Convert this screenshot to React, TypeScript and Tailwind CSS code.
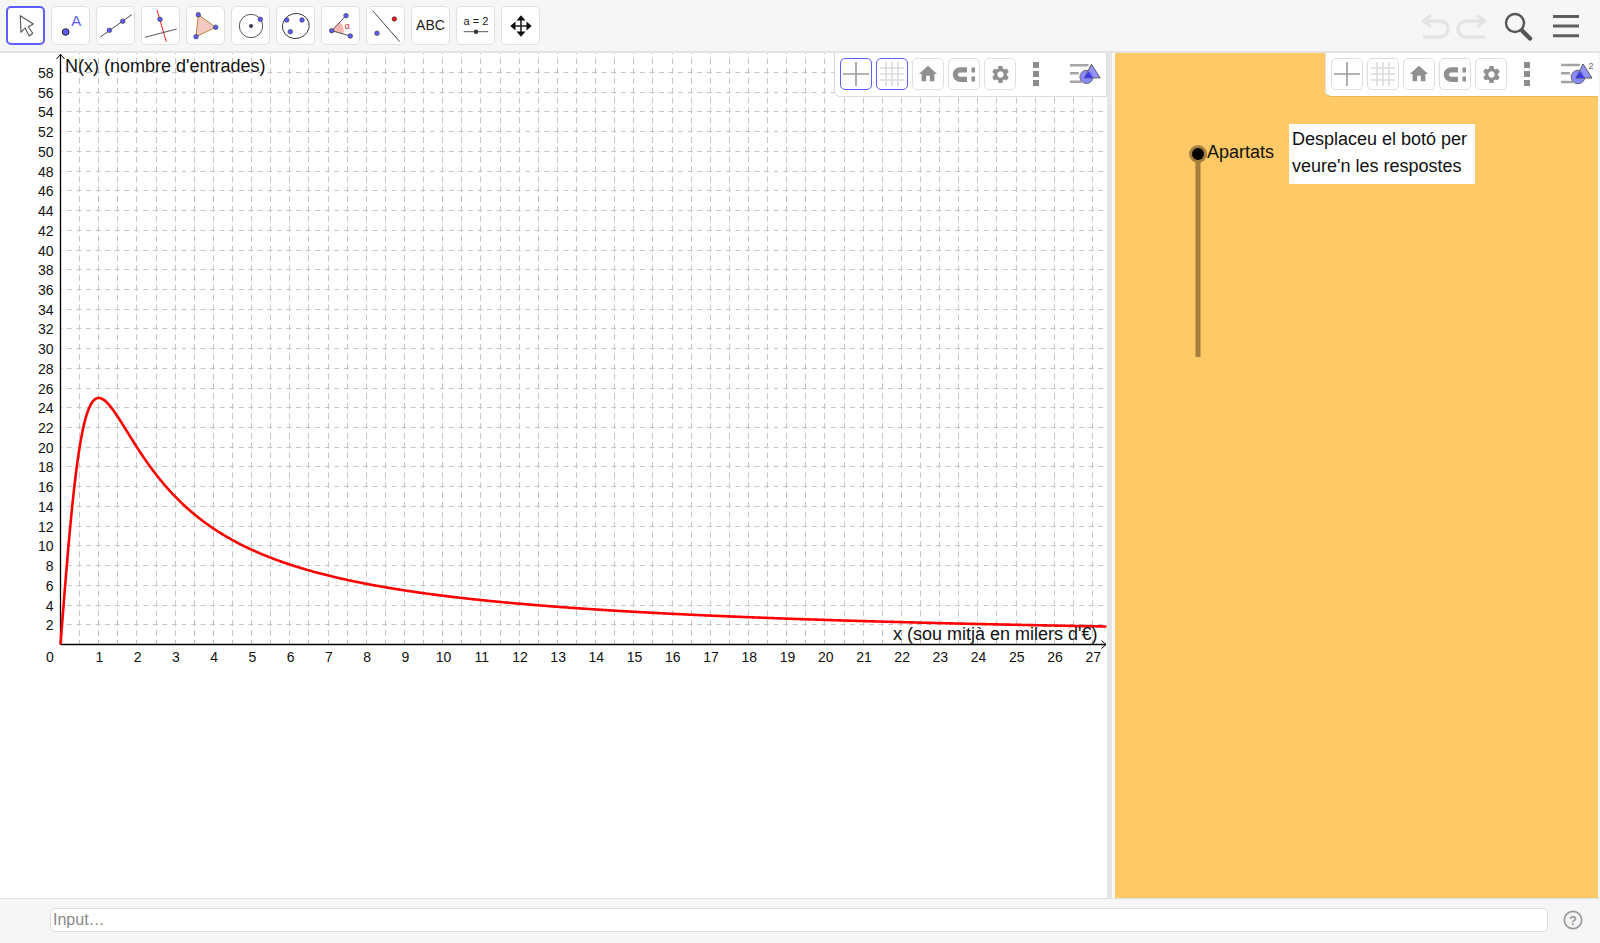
import React from "react";
import { MdHome, MdSettings } from "react-icons/md";

const BLUE = "#5c5cff";
const ox = 60.5, oy = 591.5, ux = 38.22, uy = 9.862;
const px = (x: number) => ox + x * ux;
const py = (y: number) => oy - y * uy;
const crisp = (v: number) => Math.round(v - 0.5) + 0.5;

function curve() {
  const pts: string[] = [];
  for (let sx = 0; sx <= 1046.5; sx += 1) {
    const x = sx / ux;
    pts.push(`${(ox + sx).toFixed(1)},${py((50 * x) / (x * x + 1)).toFixed(2)}`);
  }
  return pts.join(" ");
}

function Graph() {
  const xs = Array.from({ length: 55 }, (_, i) => i + 1);
  const ys = Array.from({ length: 29 }, (_, i) => (i + 1) * 2);
  const xl = Array.from({ length: 27 }, (_, i) => i + 1);
  return (
    <svg width="1107" height="845" className="block" style={{ fontFamily: "'Liberation Sans', Arial, sans-serif" }}>
      {xs.map((i) => (
        <line key={i} x1={crisp(ox + (i * ux) / 2)} x2={crisp(ox + (i * ux) / 2)} y1={0} y2={oy} stroke="#c6c6c6" strokeWidth="1" strokeDasharray="6 3.86" strokeDashoffset="4.76" />
      ))}
      {ys.map((v) => (
        <line key={v} x1={ox} x2={1107} y1={crisp(py(v))} y2={crisp(py(v))} stroke="#c6c6c6" strokeWidth="1" strokeDasharray="5 4.55" strokeDashoffset="3.2" />
      ))}
      <line x1={ox} x2={ox} y1={oy} y2={1} stroke="#000" strokeWidth="1.3" />
      <line x1={ox} x2={1106} y1={oy} y2={oy} stroke="#000" strokeWidth="1.3" />
      <path d="M56.5 6 L60.5 1.5 L64.5 6" fill="none" stroke="#000" strokeWidth="1" />
      <path d={`M1101.5 ${oy - 4} L1106 ${oy} L1101.5 ${oy + 4}`} fill="none" stroke="#000" strokeWidth="1" />
      <polyline points={curve()} fill="none" stroke="#ff0000" strokeWidth="2.6" strokeLinejoin="round" />
      {ys.map((v) => (
        <text key={v} x="53.5" y={py(v) + 5.5} fontSize="14" textAnchor="end" fill="#111">{v}</text>
      ))}
      <text x="50" y={oy + 17.5} fontSize="14" textAnchor="middle" fill="#111">0</text>
      {xl.map((v) => (
        <text key={v} x={px(v) + 0.8} y={oy + 17.5} fontSize="14" textAnchor="middle" fill="#111">{v}</text>
      ))}
      <text x="65" y="19" fontSize="18" fill="#111">N(x) (nombre d'entrades)</text>
      <text x="893" y="587" fontSize="18" fill="#111">x (sou mitjà en milers d'€)</text>
    </svg>
  );
}

function ToolBtn({ active, children }: { active?: boolean; children: React.ReactNode }) {
  return (
    <div className={active
      ? "w-[39px] h-[39px] rounded-[5px] bg-white border-2 border-[#5c5cff] flex items-center justify-center"
      : "w-[39px] h-[39px] rounded-[5px] bg-white border border-[#e0e0e0] flex items-center justify-center"}>
      <svg width="37" height="37" viewBox="0 0 37 37" className="shrink-0">{children}</svg>
    </div>
  );
}

const Dot = ({ cx, cy, r = 2.3, fill = BLUE }: { cx: number; cy: number; r?: number; fill?: string }) => (
  <circle cx={cx} cy={cy} r={r} fill={fill} stroke="#333" strokeWidth="0.6" />
);

function Toolbar() {
  return (
    <div className="h-[53px] shrink-0 bg-[#f6f6f6] border-b-2 border-[#e4e4e4] flex items-start pt-[6px] pl-[6px] pr-[20px]">
      <div className="flex gap-[6px]">
        <ToolBtn active>
          <path d="M13.3 8.7 L14 25.3 L18 21 L22.3 29 L25.7 26.3 L21.3 19.7 L26.3 17 Z" fill="#fff" stroke="#555" strokeWidth="1.1" strokeLinejoin="round" />
        </ToolBtn>
        <ToolBtn>
          <circle cx="13.7" cy="25" r="3.3" fill={BLUE} stroke="#222" strokeWidth="1" />
          <text x="19.2" y="18.9" fontSize="15" fill={BLUE} fontFamily="'Liberation Sans', sans-serif">A</text>
        </ToolBtn>
        <ToolBtn>
          <line x1="3.3" y1="30" x2="34.7" y2="7.7" stroke="#333" strokeWidth="0.9" />
          <Dot cx={12.3} cy={23.3} />
          <Dot cx={25.7} cy={14.3} />
        </ToolBtn>
        <ToolBtn>
          <line x1="3" y1="30.3" x2="34.7" y2="22" stroke="#444" strokeWidth="0.9" />
          <line x1="15" y1="3" x2="24.3" y2="34.7" stroke="#f00" strokeWidth="0.9" />
          <Dot cx={18} cy={12.3} />
        </ToolBtn>
        <ToolBtn>
          <polygon points="11.3,7.7 28.7,20.3 9,29.7" fill="#f3c8c0" stroke="#b8863a" strokeWidth="1" />
          <Dot cx={11.3} cy={7.7} />
          <Dot cx={28.7} cy={20.3} />
          <Dot cx={9} cy={29.7} />
        </ToolBtn>
        <ToolBtn>
          <circle cx="19" cy="19" r="11.7" fill="none" stroke="#444" strokeWidth="0.9" />
          <Dot cx={19} cy={19} r={1.7} fill="#3a3a70" />
          <Dot cx={28.3} cy={12.3} />
        </ToolBtn>
        <ToolBtn>
          <ellipse cx="18.8" cy="19" rx="13.5" ry="12.5" fill="none" stroke="#333" strokeWidth="0.9" transform="rotate(-15 18.8 19)" />
          <Dot cx={9.7} cy={13} />
          <Dot cx={25} cy={13} />
          <Dot cx={13.3} cy={24.7} />
        </ToolBtn>
        <ToolBtn>
          <path d="M9.7 23.7 L18 15 A12 12 0 0 1 21.3 27 Z" fill="#f6b8b0" stroke="none" />
          <line x1="9.7" y1="23.7" x2="24" y2="8.7" stroke="#444" strokeWidth="0.9" />
          <line x1="9.7" y1="23.7" x2="28.3" y2="29" stroke="#444" strokeWidth="0.9" />
          <Dot cx={9.7} cy={23.7} />
          <Dot cx={24} cy={8.7} />
          <Dot cx={28.3} cy={29} />
          <text x="22.5" y="22" fontSize="9" fill="#e03030" fontFamily="'Liberation Sans', sans-serif">α</text>
        </ToolBtn>
        <ToolBtn>
          <line x1="5.7" y1="3.7" x2="32.7" y2="34.7" stroke="#333" strokeWidth="0.9" />
          <Dot cx={10} cy={26.3} />
          <Dot cx={27.3} cy={12} fill="#e8181c" />
        </ToolBtn>
        <div className="w-[39px] h-[39px] rounded-[5px] bg-white border border-[#e0e0e0] flex items-center justify-center text-[14px] text-[#222] font-['Liberation_Sans',Arial,sans-serif]">ABC</div>
        <ToolBtn>
          <text x="19" y="18" fontSize="11" textAnchor="middle" fill="#222" fontFamily="'Liberation Sans', sans-serif">a = 2</text>
          <line x1="6.7" y1="24.7" x2="31.3" y2="24.7" stroke="#555" strokeWidth="1" />
          <circle cx="19" cy="24.7" r="2.2" fill="#333" />
        </ToolBtn>
        <ToolBtn>
          <path d="M19 10 V28 M10 19 H28" stroke="#222" strokeWidth="1.6" />
          <path d="M19 8.3 L14.5 13.5 H23.5 Z M19 29.7 L14.5 24.5 H23.5 Z M8.3 19 L13.5 14.5 V23.5 Z M29.7 19 L24.5 14.5 V23.5 Z" fill="#111" />
        </ToolBtn>
      </div>
      <div className="ml-auto flex items-start">
        <svg width="180" height="46" viewBox="0 0 180 46" className="-mt-[6px]">
          <path d="M24 21 H40 A8 8 0 0 1 40 37 H23" fill="none" stroke="#e4e4e4" strokeWidth="3.4" />
          <path d="M31 15 L23.5 21 L31 27" fill="none" stroke="#e4e4e4" strokeWidth="3.4" />
          <path d="M84 21 H66 A8 8 0 0 0 66 37 H85" fill="none" stroke="#e4e4e4" strokeWidth="3.4" />
          <path d="M77 15 L84.5 21 L77 27" fill="none" stroke="#e4e4e4" strokeWidth="3.4" />
          <circle cx="115" cy="23" r="9" fill="none" stroke="#555" strokeWidth="2.4" />
          <path d="M122.5 31 L130 38.5" stroke="#555" strokeWidth="4.5" strokeLinecap="round" />
          <path d="M153 16.5 H179 M153 26 H179 M153 35.7 H179" stroke="#5e5e5e" strokeWidth="3" />
        </svg>
      </div>
    </div>
  );
}

function SBtn({ active, children }: { active?: boolean; children: React.ReactNode }) {
  return (
    <div className={active
      ? "w-[32px] h-[32px] rounded-[5px] bg-white border border-[#5c5cff] flex items-center justify-center"
      : "w-[32px] h-[32px] rounded-[5px] bg-white border border-[#dedede] flex items-center justify-center"}>
      {children}
    </div>
  );
}

function StylePanel({ active, sup }: { active?: boolean; sup?: boolean }) {
  return (
    <div className={sup
      ? "absolute top-0 right-0 h-[44px] w-[273px] bg-white border-l border-b border-l-[#e2e2e2] border-b-[#e8b858] rounded-bl-[6px] flex items-start pt-[5px] pl-[5px]"
      : "absolute top-0 right-0 h-[44px] w-[273px] bg-white border-l border-b border-r border-[#dcdcdc] rounded-bl-[6px] flex items-start pt-[5px] pl-[5px]"}>
      <div className="flex gap-[4px]">
        <SBtn active={active}>
          <svg width="30" height="30" viewBox="0 0 30 30"><path d="M15 3 V27 M2 15 H28" stroke="#9a9a9a" strokeWidth="1.6" /></svg>
        </SBtn>
        <SBtn active={active}>
          <svg width="30" height="30" viewBox="0 0 30 30"><path d="M9 3 V27 M15 3 V27 M21 3 V27 M3 9 H27 M3 15 H27 M3 21 H27" stroke="#dcdcdc" strokeWidth="1.6" /></svg>
        </SBtn>
        <SBtn><MdHome size={22} color="#909090" /></SBtn>
        <SBtn>
          <svg width="30" height="30" viewBox="0 0 30 30">
            <path d="M18 10.9 H11 A4.7 4.7 0 0 0 11 20.3 H18" fill="none" stroke="#909090" strokeWidth="5.2" />
            <rect x="22.5" y="8.5" width="3.5" height="5" fill="#909090" />
            <rect x="22.5" y="17.5" width="3.5" height="5" fill="#909090" />
          </svg>
        </SBtn>
        <SBtn><MdSettings size={21} color="#909090" /></SBtn>
      </div>
      <div className="ml-[17px] mt-[4px] flex flex-col gap-[3px]">
        <div className="w-[6px] h-[6px] bg-[#8c8c8c]" />
        <div className="w-[6px] h-[6px] bg-[#8c8c8c]" />
        <div className="w-[6px] h-[6px] bg-[#8c8c8c]" />
      </div>
      <svg width="38" height="30" viewBox="0 0 38 30" className="ml-[30px]">
        <path d="M1 7 H20 M1 15.3 H10 M1 24 H13" stroke="#a4a4a4" strokeWidth="2.4" />
        <circle cx="18" cy="19" r="6.8" fill="#8a8aff" stroke="#666" strokeWidth="1" />
        <polygon points="23,6 32,20 16,20" fill="#8a8aff" fillOpacity="0.9" stroke="#555" strokeWidth="1" />
        <polygon points="20.5,13.5 24.5,20 15.5,20" fill="#3a3ae0" />
        {sup && <text x="28.5" y="10.5" fontSize="9" fill="#666" fontFamily="'Liberation Sans', sans-serif">2</text>}
      </svg>
    </div>
  );
}

export default function App() {
  return (
    <div className="w-[1600px] h-[943px] flex flex-col overflow-hidden bg-white font-['Liberation_Sans',Arial,sans-serif]">
      <Toolbar />
      <div className="flex-1 min-h-0 flex">
        <div className="relative w-[1107px] shrink-0 overflow-hidden">
          <Graph />
          <StylePanel active />
        </div>
        <div className="w-[5px] shrink-0 bg-[#e6e6e6]" />
        <div className="w-[3px] shrink-0 bg-white" />
        <div className="relative w-[483px] shrink-0 bg-[#ffc966] overflow-hidden">
          <StylePanel sup />
          <svg width="40" height="320" className="absolute left-[63px] top-[79px]">
            <line x1="20" y1="22" x2="20" y2="225" stroke="#a67f40" strokeWidth="5" />
            <circle cx="20" cy="22" r="9" fill="#a67f40" />
            <circle cx="20" cy="22" r="6" fill="#000" />
          </svg>
          <div className="absolute left-[92px] top-[86px] text-[18px] leading-[27px] text-[#111]">Apartats</div>
          <div className="absolute left-[174px] top-[71px] w-[186px] h-[60px] bg-white pl-[3px] pt-[2px] text-[18px] leading-[27px] text-[#111] whitespace-nowrap">
            Desplaceu el botó per<br />veure'n les respostes
          </div>
        </div>
        <div className="flex-1 bg-[#f6f6f6]" />
      </div>
      <div className="h-[45px] shrink-0 bg-[#f6f6f6] border-t border-[#e0e0e0] flex items-start pt-[9px] pl-[50px]">
        <div className="w-[1498px] h-[24px] bg-white border border-[#dcdcdc] rounded-[5px] pl-[2px] text-[16px] leading-[22px] text-[#888]">Input…</div>
        <svg width="22" height="22" viewBox="0 0 22 22" className="ml-[14px] mt-[1px]">
          <circle cx="11" cy="11" r="8.7" fill="none" stroke="#999" strokeWidth="1.7" />
          <text x="11" y="15.5" fontSize="13" fontWeight="bold" textAnchor="middle" fill="#999" fontFamily="'Liberation Sans', sans-serif">?</text>
        </svg>
      </div>
    </div>
  );
}
